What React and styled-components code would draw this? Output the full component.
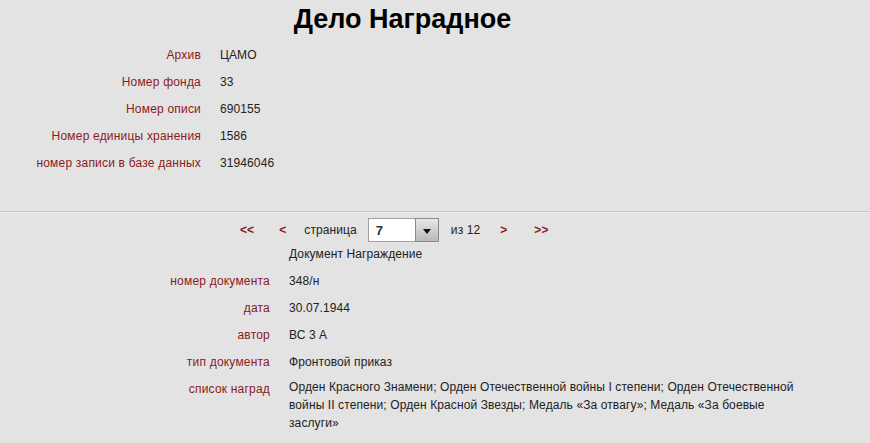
import React from "react";
import styled, { createGlobalStyle } from "styled-components";

const GlobalStyle = createGlobalStyle`
  html, body {
    margin: 0;
    padding: 0;
    background: #e3e3e3;
  }
  body {
    font-family: "Liberation Sans", Arial, sans-serif;
    font-size: 12px;
    letter-spacing: 0.1px;
    color: #222;
  }
`;

const Page = styled.div`
  width: 870px;
  min-height: 443px;
  background: #e3e3e3;
`;

const Title = styled.h1`
  width: 805px;
  margin: 0;
  padding-top: 4px;
  font-size: 27px;
  line-height: 30px;
  font-weight: bold;
  letter-spacing: 0;
  text-align: center;
  color: #000;
`;

const InfoTable = styled.div`
  display: grid;
  grid-template-columns: ${(p) => p.$labelWidth}px 1fr;
  column-gap: 19px;
  margin-top: ${(p) => p.$top || 0}px;
`;

const Label = styled.div`
  text-align: right;
  color: #8b1a1a;
  line-height: 14px;
  padding: 6.5px 0;
  letter-spacing: 0.2px;
`;

const Value = styled.div`
  color: #222;
  line-height: ${(p) => (p.$multi ? "18px" : "14px")};
  padding: ${(p) => (p.$multi ? "4.5px 0" : "6.5px 0")};
  max-width: 515px;
  margin-top: ${(p) => (p.$multi ? "-2px" : "0")};
`;

const Divider = styled.hr`
  margin: 35px 0 0;
  border: 0;
  border-top: 1px solid #c8c8c8;
  border-bottom: 1px solid #ececec;
  height: 0;
`;

const Pager = styled.div`
  display: flex;
  align-items: center;
  padding-left: 240px;
  margin-top: 5px;
  height: 24px;
`;

const PagerLink = styled.a`
  margin-left: ${(p) => p.$ml || 0}px;
  color: #8b1a1a;
  font-weight: bold;
  font-size: 12px;
  text-decoration: none;
  cursor: pointer;
`;

const PagerText = styled.span`
  margin-left: ${(p) => p.$ml || 0}px;
  color: #222;
`;

const SelectBox = styled.div`
  display: flex;
  margin-left: ${(p) => p.$ml || 0}px;
  height: 24px;
`;

const SelectInput = styled.div`
  width: 39px;
  height: 22px;
  padding-left: 7px;
  background: #fff;
  border: 1px solid #a0a0a0;
  border-right: 0;
  display: flex;
  align-items: center;
  font-size: 13px;
  font-weight: bold;
  color: #1f3440;
`;

const SelectButton = styled.div`
  width: 22px;
  height: 22px;
  border: 1px solid #8a8a8a;
  background: linear-gradient(#e8e8e8, #b9b9b9);
  display: flex;
  align-items: center;
  justify-content: center;
`;

const Arrow = styled.span`
  width: 0;
  height: 0;
  border-left: 4px solid transparent;
  border-right: 4px solid transparent;
  border-top: 5px solid #111;
  margin-top: 2px;
`;

const topRows = [
  ["Архив", "ЦАМО"],
  ["Номер фонда", "33"],
  ["Номер описи", "690155"],
  ["Номер единицы хранения", "1586"],
  ["номер записи в базе данных", "31946046"],
];

const docRows = [
  ["", "Документ Награждение"],
  ["номер документа", "348/н"],
  ["дата", "30.07.1944"],
  ["автор", "ВС 3 А"],
  ["тип документа", "Фронтовой приказ"],
];

const awards =
  "Орден Красного Знамени; Орден Отечественной войны I степени; Орден Отечественной войны II степени; Орден Красной Звезды; Медаль «За отвагу»; Медаль «За боевые заслуги»";

export default function App() {
  return (
    <Page>
      <GlobalStyle />
      <Title>Дело Наградное</Title>
      <InfoTable $labelWidth={201} $top={7}>
        {topRows.map(([l, v]) => (
          <React.Fragment key={l}>
            <Label>{l}</Label>
            <Value>{v}</Value>
          </React.Fragment>
        ))}
      </InfoTable>
      <Divider />
      <Pager>
        <PagerLink>&lt;&lt;</PagerLink>
        <PagerLink $ml={25}>&lt;</PagerLink>
        <PagerText $ml={18}>страница</PagerText>
        <SelectBox $ml={11}>
          <SelectInput>7</SelectInput>
          <SelectButton>
            <Arrow />
          </SelectButton>
        </SelectBox>
        <PagerText $ml={12}>из 12</PagerText>
        <PagerLink $ml={20}>&gt;</PagerLink>
        <PagerLink $ml={27}>&gt;&gt;</PagerLink>
      </Pager>
      <InfoTable $labelWidth={270} $top={-2}>
        {docRows.map(([l, v], i) => (
          <React.Fragment key={i}>
            <Label>{l}</Label>
            <Value>{v}</Value>
          </React.Fragment>
        ))}
        <Label>список наград</Label>
        <Value $multi>{awards}</Value>
      </InfoTable>
    </Page>
  );
}
